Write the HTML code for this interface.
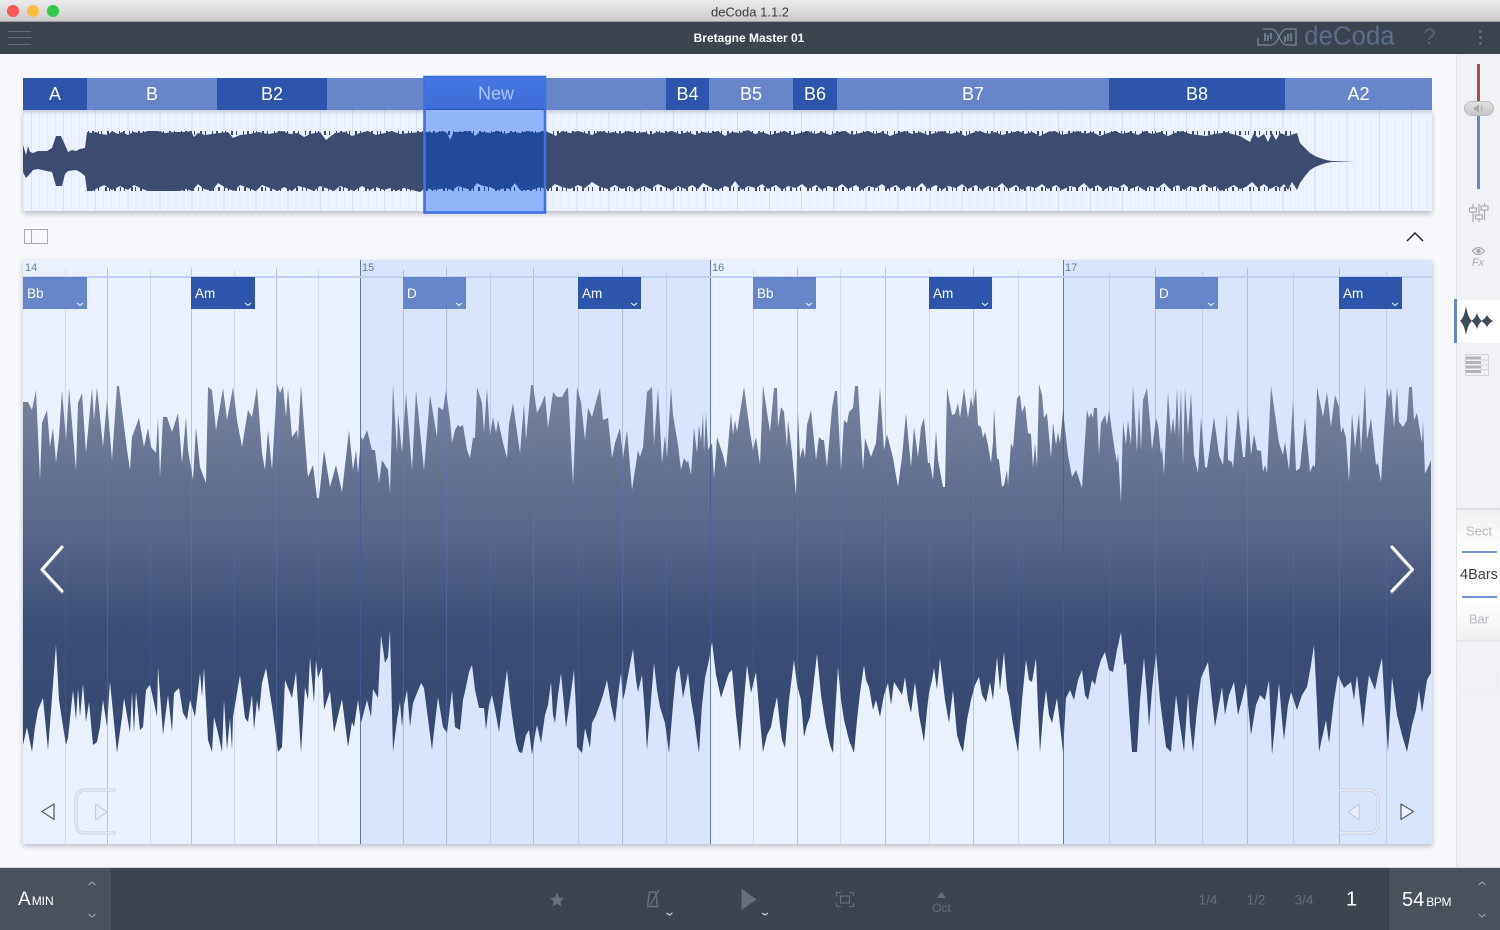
<!DOCTYPE html>
<html><head><meta charset="utf-8"><title>deCoda</title>
<style>
*{box-sizing:border-box}
html,body{margin:0;padding:0;width:1500px;height:930px;overflow:hidden;background:#f7f8fb;font-family:"Liberation Sans",sans-serif}
.a{position:absolute}
.t{position:absolute;white-space:nowrap;transform:translate(-50%,-50%)}
.s{position:absolute;top:78px;height:32px;color:#fff;font-size:18px;line-height:32px;text-align:center}
.d{background:#2c55ab}.l{background:#6785c9}
.c{position:absolute;top:277px;width:64px;height:32px;color:#fff;font-size:13.5px;line-height:33px;padding-left:4px}
.c svg{position:absolute;right:3px;bottom:2px}
.n{position:absolute;top:262px;font-size:11px;color:#5f7cbf}
</style></head><body>
<!-- title bar -->
<div class="a" style="left:0;top:0;width:1500px;height:22px;background:linear-gradient(#ebebeb,#cdcdcd);border-bottom:1px solid #9c9c9c"></div>
<div class="a" style="left:7px;top:5px;width:12px;height:12px;border-radius:50%;background:#fc5753"></div>
<div class="a" style="left:27px;top:5px;width:12px;height:12px;border-radius:50%;background:#fdbc40"></div>
<div class="a" style="left:47px;top:5px;width:12px;height:12px;border-radius:50%;background:#33c748"></div>
<div class="t" style="left:750px;top:11.500px;font-size:13px;color:#3c3c3c">deCoda 1.1.2</div>
<!-- nav -->
<div class="a" style="left:0;top:22px;width:1500px;height:32px;background:#3b444f"></div>
<div class="a" style="left:8px;top:30.500px;width:23px;height:1px;background:#626b76"></div>
<div class="a" style="left:8px;top:37px;width:23px;height:1px;background:#626b76"></div>
<div class="a" style="left:8px;top:43.500px;width:23px;height:1px;background:#626b76"></div>
<div class="t" style="left:749px;top:38px;font-size:12px;font-weight:bold;color:#fff">Bretagne Master 01</div>
<svg class="a" style="left:1255px;top:26px" width="44" height="22" viewBox="1255 26 44 22" fill="none" stroke="#75879f" stroke-width="1.300">
<path d="M1258 38V45H1271C1279 45 1279 29 1287 29H1296V45H1287C1279 45 1279 29 1271 29H1263"/>
<path d="M1265 33V41M1268 35V41M1271 33V39M1285 36V42M1288 34V41M1291 33V41" stroke-width="1.600"/>
</svg>
<div class="t" style="left:1349.500px;top:37px;font-size:25.500px;color:#5c6e8c;letter-spacing:.2px">deCoda</div>
<div class="t" style="left:1429.500px;top:37px;font-size:22px;color:#596472">?</div>
<div class="a" style="left:1479px;top:30px;width:3px;height:3px;border-radius:50%;background:#626c78"></div>
<div class="a" style="left:1479px;top:36px;width:3px;height:3px;border-radius:50%;background:#626c78"></div>
<div class="a" style="left:1479px;top:42px;width:3px;height:3px;border-radius:50%;background:#626c78"></div>

<!-- right sidebar -->
<div class="a" style="left:1456px;top:54px;width:44px;height:813px;background:#f0f1f4;border-left:1px solid #e2e3e7"></div>
<div class="a" style="left:1477px;top:64px;width:3px;height:38px;background:#b0474d"></div>
<div class="a" style="left:1477px;top:114px;width:3px;height:75px;background:#6785c9"></div>
<div class="a" style="left:1464px;top:101px;width:30px;height:15px;border-radius:8px;background:linear-gradient(#e2e2e4,#c6c7ca);border:1px solid #bcbdc0"></div>
<svg class="a" style="left:1473px;top:103px" width="12" height="11" viewBox="0 0 12 11"><path d="M1 4H3L6 1V10L3 7H1Z" fill="#a4a6aa"/><path d="M8 3Q10 5.500 8 8" stroke="#a4a6aa" fill="none"/></svg>
<svg class="a" style="left:1468px;top:203px" width="21" height="20" viewBox="0 0 21 20" fill="none" stroke="#a5a8ae" stroke-width="1.100">
<path d="M5 1V5M5 9V19M11 1V12M11 16V19M16.500 0V3M16.500 7V17"/><rect x="1.500" y="5" width="7" height="4"/><rect x="7.500" y="12" width="7" height="4"/><rect x="13" y="3" width="7" height="4"/></svg>
<svg class="a" style="left:1472px;top:246px" width="13" height="10" viewBox="0 0 13 10"><path d="M.5 5Q6.500-2 12.500 5Q6.500 12 .5 5Z" fill="none" stroke="#a9abb1" stroke-width="1.200"/><circle cx="6.500" cy="5" r="2.300" fill="#a9abb1"/></svg>
<div class="t" style="left:1478px;top:263px;font-size:11px;font-style:italic;color:#a9abb1">Fx</div>
<div class="a" style="left:1457px;top:300px;width:43px;height:43px;background:#fff"></div>
<div class="a" style="left:1454px;top:299px;width:3px;height:44px;background:#6785c9"></div>
<svg class="a" style="left:1459px;top:305px" width="36" height="31" viewBox="1459 305 36 31" fill="#3f4b59"><path d="M1460 321Q1464 318 1466 306Q1468 318 1472 321Q1468 324 1466 335Q1464 324 1460 321Z"/><path d="M1471 321Q1475 319 1477 313Q1479 319 1482 321Q1479 323 1477 329Q1475 323 1471 321Z"/><path d="M1481 321Q1485 319 1487 315Q1489 319 1493 321Q1489 323 1487 327Q1485 323 1481 321Z"/></svg>
<svg class="a" style="left:1465px;top:353px" width="25" height="24" viewBox="0 0 25 24"><rect x=".5" y="1.500" width="23" height="21" rx="1" fill="none" stroke="#d3d4d8"/><path d="M1 5H16M1 9.500H16M1 14H16M1 18.500H16" stroke="#b3b5ba" stroke-width="3"/><path d="M16 7H24M16 12H24M16 16.500H24" stroke="#d3d4d8"/></svg>
<div class="a" style="left:1457px;top:508px;width:43px;height:134px;background:linear-gradient(#eeeff1,#fff 30%,#fff 70%,#eeeff1);border-top:2px solid #dcdde0;border-bottom:2px solid #e6e7ea"></div>
<div class="t" style="left:1479px;top:530.500px;font-size:13px;color:#b6b8bd">Sect</div>
<div class="a" style="left:1462px;top:551px;width:35px;height:2px;background:#7692d2"></div>
<div class="t" style="left:1479px;top:574.500px;font-size:14.500px;color:#3a3f47">4Bars</div>
<div class="a" style="left:1462px;top:595.500px;width:35px;height:2px;background:#7692d2"></div>
<div class="t" style="left:1479px;top:618.500px;font-size:13px;color:#b6b8bd">Bar</div>
<div class="a" style="left:1460px;top:670px;width:37px;height:23px;border:1px solid #ebecef"></div>

<!-- overview -->
<div class="a" style="left:23px;top:110px;width:1409px;height:101px;background-color:#ecf2fe;background-image:repeating-linear-gradient(90deg,#d3dff6 0,#d3dff6 1px,transparent 1px,transparent 32.090px),repeating-linear-gradient(90deg,#e4ebfb 0,#e4ebfb 1px,transparent 1px,transparent 8.020px);background-position:8px 0,0 0;box-shadow:0 3px 5px rgba(60,70,100,.3)"></div>
<div class="s d" style="left:23px;width:64px">A</div>
<div class="s l" style="left:87px;width:130px">B</div>
<div class="s d" style="left:217px;width:110px">B2</div>
<div class="s l" style="left:327px;width:97px"></div>
<div class="s l" style="left:546px;width:120px"></div>
<div class="s d" style="left:666px;width:43px">B4</div>
<div class="s l" style="left:709px;width:84px">B5</div>
<div class="s d" style="left:793px;width:44px">B6</div>
<div class="s l" style="left:837px;width:272px">B7</div>
<div class="s d" style="left:1109px;width:176px">B8</div>
<div class="s l" style="left:1285px;width:147px">A2</div>
<div class="a" style="left:23px;top:110px;width:1409px;height:5px;background:linear-gradient(rgba(70,80,110,.22),transparent)"></div>
<div class="a" style="left:424px;top:78px;width:122px;height:134px;background:#92b4f8"></div>
<div class="a" style="left:424px;top:78px;width:122px;height:32px;background:linear-gradient(#4677e2,#3f6dd8);border-bottom:1px solid #3259ad"></div>
<svg class="a" style="left:0;top:0" width="1500" height="230" viewBox="0 0 1500 230">
<defs><g id="ow"><path d="M23 145L26 155 28 146 30 152 33 153 38 151 47 151 52 148 56 136 61 136 65 145 68 152 72 150 76 151 80 149 85 148 87 132 92 133 96 132 100 134 108 135 112 131 118 134 122 132 128 135 133 132 140 133 148 131 158 131 165 133 175 132 185 132 191 131 194 137 198 133 205 135 212 134 220 133 228 132 233 138 240 135 250 134 258 132 268 134 275 133 282 131 290 134 298 133 304 137 310 134 320 132 326 140 335 133 345 132 352 136 360 133 368 131 376 135 385 133 392 131 400 134 410 133 420 132 427 132 435 133 443 131 447 133 450 140 454 132 462 132 470 131 475 136 480 132 490 133 498 131 505 134 512 132 520 133 528 131 535 133 545 131 550 133 556 136 562 131 570 133 578 131 585 133 592 135 600 131 608 133 614 132 620 134 628 131 636 133 645 132 650 135 657 132 665 133 672 131 680 134 688 132 695 135 702 132 710 133 718 131 725 136 732 132 740 133 748 130 755 134 762 132 770 135 778 133 785 131 792 135 800 133 808 131 815 134 822 132 830 135 838 132 845 131 852 135 860 133 868 131 875 134 882 132 890 136 898 133 905 131 912 134 920 132 928 135 935 133 942 131 950 134 958 132 965 136 972 133 980 131 988 134 995 132 1002 135 1010 133 1018 131 1025 134 1032 132 1040 136 1048 132 1055 131 1062 135 1070 133 1078 131 1085 134 1092 132 1100 136 1108 133 1115 131 1122 134 1130 132 1138 135 1145 131 1152 134 1160 132 1168 136 1175 133 1182 131 1190 134 1198 135 1206 136 1214 134 1222 133 1226 132 1232 134 1240 136 1250 142 1254 133 1258 138 1264 134 1268 142 1272 133 1276 140 1280 133 1288 136 1297 133 1300 143 1305 148 1310 153 1315 156 1320 158 1326 160 1332 161 1355 161 1332 162 1326 163 1320 165 1315 167 1310 170 1305 176 1300 183 1297 190 1292 182 1288 190 1284 184 1280 188 1276 186 1270 189 1264 184 1258 188 1252 182 1246 187 1240 189 1234 185 1228 188 1220 191 1216 186 1210 188 1204 184 1198 188 1190 186 1184 190 1178 185 1170 189 1164 183 1158 188 1150 186 1144 190 1138 186 1130 189 1124 184 1118 188 1110 186 1104 190 1098 185 1090 189 1084 183 1078 188 1070 186 1062 190 1056 185 1048 189 1042 184 1036 188 1028 186 1022 190 1016 185 1008 189 1002 183 996 188 988 186 982 190 976 185 968 189 962 184 956 188 948 186 942 190 936 185 928 189 922 183 916 188 908 186 902 190 896 185 888 189 882 184 876 188 868 186 862 190 856 185 848 189 842 184 836 188 828 186 822 190 816 185 808 189 802 184 796 188 788 186 782 190 776 185 768 189 762 184 756 188 748 186 742 190 735 181 730 188 725 186 718 190 710 187 703 183 698 189 692 185 685 189 678 186 672 190 665 187 658 184 650 189 644 186 636 190 630 186 622 189 615 185 608 189 600 187 592 182 585 188 578 185 570 189 562 187 555 184 549 189 545 189 540 187 535 189 528 190 520 190 515 183 510 189 505 188 497 190 490 187 483 186 477 183 471 190 465 188 458 186 452 190 446 188 440 189 432 190 426 187 420 192 412 190 404 188 396 191 390 188 384 190 376 187 370 190 362 186 354 191 346 188 340 186 334 191 326 188 320 186 314 191 306 188 298 186 292 191 284 187 278 191 270 188 262 185 256 191 248 188 240 185 234 191 226 188 218 183 212 191 204 189 198 184 192 191 186 189 180 191 170 191 156 191 148 191 140 188 134 185 128 190 120 186 112 190 104 185 98 188 92 191 87 191 85 176 80 172 76 170 68 171 65 174 62 186 56 186 52 172 47 171 38 169 33 170 28 176 26 178 23 172Z"/></g>
<clipPath id="sel"><rect x="424" y="110" width="122" height="104"/></clipPath></defs>
<g fill="#3c4c70" stroke="#3c4c70"><use href="#ow" stroke="none"/>
<path d="M88 133H1292" stroke-width="4" stroke-dasharray="1 3 2 4 1 2 1 5 2 3 1 6"/>
<path d="M88 189H1292" stroke-width="4" stroke-dasharray="2 4 1 3 1 6 2 2 1 4"/></g>
<g clip-path="url(#sel)" fill="#224a9a" stroke="#224a9a"><use href="#ow" stroke="none"/>
<path d="M88 133H1292" stroke-width="4" stroke-dasharray="1 3 2 4 1 2 1 5 2 3 1 6"/>
<path d="M88 189H1292" stroke-width="4" stroke-dasharray="2 4 1 3 1 6 2 2 1 4"/></g>
<rect x="424.500" y="77" width="120.500" height="135.500" fill="none" stroke="#3f72e3" stroke-width="2.600"/>
</svg>
<div class="t" style="left:496px;top:94px;font-size:18px;color:#a9c6f8">New</div>

<!-- toggle & chevron -->
<div class="a" style="left:24px;top:229px;width:24px;height:15px;border:1px solid #a9abb0"></div>
<div class="a" style="left:31px;top:229px;width:1px;height:15px;background:#a9abb0"></div>
<svg class="a" style="left:1405px;top:230px" width="20" height="13" viewBox="0 0 20 13"><path d="M2 11L10 3L18 11" fill="none" stroke="#222" stroke-width="1.400"/></svg>

<!-- main panel -->
<div class="a" style="left:23px;top:260px;width:1409px;height:584px;background:#eaf1fe;box-shadow:0 2px 5px rgba(60,70,100,.35)"></div>
<div class="a" style="left:360px;top:260px;width:350px;height:584px;background:#d8e5fc"></div>
<div class="a" style="left:1063px;top:260px;width:369px;height:584px;background:#d8e5fc"></div>
<svg class="a" style="left:0;top:0" width="1500" height="930" viewBox="0 0 1500 930">
<defs><linearGradient id="g" gradientUnits="userSpaceOnUse" x1="0" y1="385" x2="0" y2="760">
<stop offset="0" stop-color="#76849f"/><stop offset=".35" stop-color="#5c6a8c"/><stop offset=".65" stop-color="#3c4e77"/><stop offset="1" stop-color="#33476f"/></linearGradient></defs>
<path fill="url(#g)" d="M23 580V402L28 402 32 410 36 390 40 480 42 423 47 410 50 447 53 428 56 462 59 437 62 390 66 440 69 388 76 470 78 403 82 393 86 453 92 388 94 420 97 387 103 447 107 400 112 460 117 386 119 386 127 450 130 470 132 437 139 418 144 447 148 428 151 447 156 453 158 417 160 477 163 417 167 417 172 432 178 413 182 463 186 417 188 450 193 480 196 427 200 467 206 483 208 387 212 390 216 430 223 388 227 420 233 387 237 420 242 447 248 410 252 417 257 387 262 453 265 470 268 430 272 470 277 384 280 393 283 386 286 417 288 388 292 437 297 430 298 440 301 385 307 467 308 477 313 465 317 498 319 498 324 450 330 487 336 465 342 492 349 430 353 470 356 450 358 473 361 437 363 440 367 430 372 450 375 450 379 483 382 460 388 470 390 493 393 384 397 453 398 413 402 453 406 393 412 470 416 390 424 470 430 395 437 437 438 407 443 410 446 390 450 420 452 443 455 430 458 425 460 427 463 425 467 450 470 458 473 438 475 438 477 387 482 403 484 432 487 388 490 435 493 417 496 433 498 420 503 443 507 458 509 424 513 403 516 425 520 453 524 403 526 440 531 385 533 385 537 413 541 405 545 395 548 428 553 392 557 397 562 397 567 388 568 388 573 485 577 387 581 402 585 440 588 408 592 417 597 398 600 388 603 420 608 418 612 458 615 443 620 428 623 458 627 430 632 490 638 450 640 457 643 447 647 392 652 387 654 445 658 388 662 463 665 435 667 458 671 387 673 415 678 445 681 470 684 458 687 463 688 460 691 475 694 428 697 453 699 425 701 442 703 413 704 452 706 412 708 450 712 443 714 478 717 437 723 455 726 468 731 413 733 435 735 420 737 432 744 387 750 432 753 450 756 437 760 465 763 385 767 412 770 432 774 388 777 388 778 427 781 407 784 412 787 448 788 420 792 453 796 495 798 412 800 458 803 447 805 458 807 425 811 410 816 460 819 437 822 440 824 440 827 467 832 408 835 391 837 391 841 470 844 420 847 423 849 412 853 408 855 386 858 386 863 470 865 438 871 457 876 443 880 388 884 450 887 434 893 458 898 487 902 457 906 413 911 467 914 427 918 457 921 427 924 418 928 463 930 463 933 480 936 430 938 460 943 487 945 487 947 388 952 415 955 414 958 403 960 418 964 388 968 418 971 397 973 407 976 388 978 425 981 427 983 438 985 432 988 445 991 463 993 442 994 408 997 458 999 460 1002 487 1004 485 1007 470 1008 485 1011 443 1013 448 1017 398 1020 395 1022 412 1025 405 1028 433 1031 434 1033 468 1035 443 1037 467 1039 384 1042 395 1044 418 1047 413 1051 458 1053 422 1056 445 1058 432 1060 443 1063 410 1068 455 1072 477 1076 470 1082 488 1084 455 1087 410 1089 418 1091 413 1093 418 1094 408 1097 408 1099 455 1101 423 1105 415 1107 425 1109 410 1115 452 1117 463 1118 453 1121 503 1123 422 1126 445 1128 420 1131 445 1133 385 1137 452 1139 405 1141 450 1143 400 1147 388 1150 422 1152 450 1156 418 1158 425 1161 455 1162 447 1164 475 1168 392 1171 435 1173 417 1175 435 1177 388 1179 438 1181 389 1183 465 1185 388 1188 435 1191 392 1194 455 1198 473 1201 417 1205 467 1207 468 1214 417 1219 455 1223 465 1227 413 1228 460 1232 462 1233 468 1238 408 1243 457 1245 457 1248 413 1251 455 1254 434 1257 450 1261 451 1263 472 1265 465 1267 473 1271 386 1275 414 1279 443 1283 455 1285 442 1289 470 1293 400 1296 471 1300 468 1305 418 1310 472 1313 465 1315 467 1317 387 1323 417 1327 392 1331 427 1335 395 1339 407 1341 433 1343 427 1346 438 1349 482 1352 413 1355 448 1359 413 1361 453 1365 385 1367 440 1371 418 1376 465 1378 463 1381 482 1383 447 1387 388 1389 398 1391 388 1394 428 1397 388 1399 422 1403 427 1407 420 1409 387 1412 387 1414 420 1417 413 1422 443 1423 420 1425 474 1429 465 1431 460V580Z"/>
<path fill="url(#g)" d="M23 575V745L27 727 32 752 35 727 38 710 43 698 48 750 56 645 59 700 62 720 66 745 68 738 73 690 76 720 78 688 80 717 83 684 86 722 89 702 93 745 97 742 100 727 103 700 107 727 110 682 112 702 117 753 122 717 124 698 130 733 132 692 134 733 136 692 140 730 143 727 146 690 150 685 153 698 157 717 158 667 163 735 168 695 172 732 174 693 179 688 183 713 187 720 190 700 195 717 200 673 202 697 204 668 208 740 212 752 214 717 218 733 222 752 224 700 227 750 230 718 232 750 233 717 240 675 245 718 248 722 252 695 254 730 257 700 259 713 262 683 266 668 273 713 278 752 282 747 285 680 292 698 296 672 301 753 305 687 308 700 310 657 314 703 316 660 318 678 322 667 324 710 330 691 334 733 342 699 348 747 352 722 354 727 358 700 361 723 367 700 371 717 373 689 378 698 381 635 385 663 388 657 390 630 393 752 397 720 400 702 402 727 404 705 407 690 410 727 413 703 421 683 424 688 432 750 433 740 438 697 443 727 447 733 452 690 455 727 460 730 463 700 466 687 469 672 472 665 475 690 479 708 484 708 486 730 489 705 492 695 496 715 499 732 503 700 507 670 510 700 513 723 516 742 519 752 522 753 526 735 529 730 532 755 535 735 537 725 541 743 545 715 548 705 551 682 553 715 555 723 558 695 561 673 564 705 566 728 570 700 574 670 576 710 577 747 582 753 585 728 590 748 592 723 596 715 599 707 603 695 607 680 611 705 615 723 618 695 621 673 623 700 625 692 629 670 633 649 636 680 638 692 642 675 645 715 647 750 651 700 654 663 657 690 660 707 665 723 669 753 673 705 676 673 679 665 683 698 688 673 691 700 694 717 697 740 699 753 702 705 705 678 709 660 712 642 716 675 721 698 725 685 729 673 732 670 736 715 740 752 744 700 747 665 751 693 756 672 760 720 763 752 767 735 771 727 774 710 777 697 780 725 782 740 785 748 789 700 794 660 797 685 801 700 804 737 807 725 810 717 814 680 817 654 821 695 826 727 830 745 833 753 836 700 838 667 841 700 844 720 849 740 854 753 857 720 860 693 864 665 866 680 869 687 873 710 876 700 880 717 884 695 888 683 891 705 894 682 899 690 902 695 905 677 908 700 911 713 915 682 919 715 924 742 927 710 929 693 932 680 934 668 937 690 940 658 945 700 949 723 953 690 957 735 960 745 963 752 967 720 971 700 975 685 979 677 982 695 986 702 990 682 993 700 997 657 1000 690 1004 652 1007 690 1009 697 1013 725 1018 752 1022 700 1026 660 1029 680 1032 682 1036 658 1038 710 1040 753 1043 715 1046 690 1049 715 1052 723 1057 698 1060 725 1063 752 1066 698 1070 690 1074 700 1078 680 1082 670 1085 695 1088 700 1092 680 1095 685 1098 670 1101 660 1105 652 1109 670 1113 672 1117 650 1121 632 1124 665 1126 663 1129 710 1132 752 1137 752 1140 700 1144 658 1147 695 1149 727 1152 690 1156 653 1160 700 1166 747 1171 752 1176 695 1180 725 1184 752 1188 693 1190 725 1193 752 1197 710 1201 678 1208 662 1212 700 1215 727 1222 687 1225 715 1229 695 1234 682 1238 715 1242 700 1246 683 1249 715 1251 735 1256 705 1260 695 1265 700 1269 680 1272 755 1276 715 1279 683 1282 720 1284 740 1288 705 1291 692 1297 710 1302 695 1307 687 1311 665 1314 645 1317 705 1319 752 1326 720 1329 743 1334 700 1338 675 1344 688 1351 682 1354 700 1357 675 1363 728 1366 700 1369 675 1375 690 1379 670 1382 658 1385 710 1388 752 1392 677 1397 715 1402 735 1407 752 1412 725 1416 710 1419 690 1422 713 1427 680 1431 673V575Z"/>
<!-- grid -->
<path stroke="#5d7fc8" stroke-opacity=".2" stroke-width="1" d="M65.500 270V844M150.500 270V844M234.500 270V844M318.500 270V844M490.500 270V844M578.500 270V844M666.500 270V844M753.500 270V844M840.500 270V844M929.500 270V844M1018.500 270V844M1109.500 270V844M1202.500 270V844M1293.500 270V844M1386.500 270V844"/>
<path stroke="#5d7fc8" stroke-opacity=".38" stroke-width="1" d="M107.500 268V844M191.500 268V844M276.500 268V844M403.500 270V844M446.500 268V844M533.500 268V844M622.500 268V844M797.500 268V844M885.500 268V844M973.500 268V844M1155.500 268V844M1247.500 268V844M1339.500 268V844"/>
<path stroke="#3f5c9c" stroke-opacity=".8" stroke-width="1" d="M360.500 260V844M710.500 260V844M1063.500 260V844"/>
<rect x="23" y="276" width="1409" height="2" fill="#c0d0f0"/>
<!-- nav chevrons -->
<g fill="none" stroke="#8a93a8" stroke-opacity=".55" stroke-width="3.500" stroke-linecap="round" stroke-linejoin="round"><path d="M62 548L42 570.500L62 592.500M1392 548L1412 570.500L1392 592.500"/></g>
<g fill="none" stroke="#fff" stroke-width="3" stroke-linecap="round" stroke-linejoin="round"><path d="M62 547L42 569.500L62 591M1392 547L1412.500 569.500L1392 591"/></g>
<!-- loop brackets -->
<g fill="none" stroke="#c9d0de" stroke-width="3.200" stroke-linecap="round"><path d="M114 790H86Q76 790 76 800V823Q76 833 86 833H114M1340 790H1368Q1378 790 1378 800V823Q1378 833 1368 833H1340"/></g>
<g fill="none" stroke="#edf2fc" stroke-width="1.200" stroke-linecap="round"><path d="M114 790H86Q76 790 76 800V823Q76 833 86 833H114M1340 790H1368Q1378 790 1378 800V823Q1378 833 1368 833H1340"/></g>
<path d="M54 804L42 811.500L54 819.500ZM1401 804L1413.500 811.500L1401 819.500Z" fill="#eef3fd" stroke="#5c6068" stroke-width="1.300" stroke-linejoin="round"/>
<path d="M95.500 804L107 812L95.500 820ZM1359.500 804L1348 812L1359.500 820Z" fill="#e8eefa" stroke="#c6cedd" stroke-width="1.300" stroke-linejoin="round"/>
</svg>
<div class="n" style="left:25px">14</div><div class="n" style="left:362px">15</div><div class="n" style="left:712px">16</div><div class="n" style="left:1065px">17</div>
<div class="c l" style="left:23px">Bb<svg width="8" height="5" viewBox="0 0 8 5"><path d="M1 1L4 3.500L7 1" stroke="#fff" fill="none"/></svg></div>
<div class="c d" style="left:191px">Am<svg width="8" height="5" viewBox="0 0 8 5"><path d="M1 1L4 3.500L7 1" stroke="#fff" fill="none"/></svg></div>
<div class="c l" style="left:403px;width:63px">D<svg width="8" height="5" viewBox="0 0 8 5"><path d="M1 1L4 3.500L7 1" stroke="#fff" fill="none"/></svg></div>
<div class="c d" style="left:578px;width:63px">Am<svg width="8" height="5" viewBox="0 0 8 5"><path d="M1 1L4 3.500L7 1" stroke="#fff" fill="none"/></svg></div>
<div class="c l" style="left:753px;width:63px">Bb<svg width="8" height="5" viewBox="0 0 8 5"><path d="M1 1L4 3.500L7 1" stroke="#fff" fill="none"/></svg></div>
<div class="c d" style="left:929px;width:63px">Am<svg width="8" height="5" viewBox="0 0 8 5"><path d="M1 1L4 3.500L7 1" stroke="#fff" fill="none"/></svg></div>
<div class="c l" style="left:1155px;width:63px">D<svg width="8" height="5" viewBox="0 0 8 5"><path d="M1 1L4 3.500L7 1" stroke="#fff" fill="none"/></svg></div>
<div class="c d" style="left:1339px;width:63px">Am<svg width="8" height="5" viewBox="0 0 8 5"><path d="M1 1L4 3.500L7 1" stroke="#fff" fill="none"/></svg></div>

<!-- bottom bar -->
<div class="a" style="left:0;top:867px;width:1500px;height:63px;background:#3b444f;border-top:1px solid #d9dadd"></div>
<div class="a" style="left:0;top:868px;width:111px;height:62px;background:#47525c"></div>
<div class="a" style="left:1389px;top:868px;width:111px;height:62px;background:#47525c"></div>
<div class="a" style="left:18px;top:889px;font-size:19px;color:#fff;line-height:22px">A<span style="font-size:12px;margin-left:1px">MIN</span></div>
<div class="a" style="left:1402px;top:888px;font-size:20px;color:#fff;line-height:24px">54<span style="font-size:12px;margin-left:2px;letter-spacing:-.4px">BPM</span></div>
<svg class="a" style="left:0;top:868px" width="1500" height="62" viewBox="0 868 1500 62" fill="none">
<path d="M88.500 885L92 882L95.500 885M88.500 914L92 917L95.500 914M1478.500 885L1482 882L1485.500 885M1478.500 914L1482 917L1485.500 914" stroke="#a4aab1" stroke-width="1"/>
<path d="M557 892.500L559.200 897.500L564 898L560.400 901.500L561.500 906.500L557 904L552.500 906.500L553.600 901.500L550 898L554.800 897.500Z" fill="#66717e"/>
<path d="M649.500 892H655.500L657.500 906.500H647.500Z" stroke="#66717e" stroke-width="1.400" stroke-linejoin="round"/><path d="M650 905L659 890" stroke="#66717e" stroke-width="1.300"/>
<path d="M741.500 888.500L756.500 899.500L741.500 910Z" fill="#66717e"/>
<path d="M666.500 913L669.500 915L672.500 913M762 913L765 915L768 913" stroke="#c8ccd1" stroke-width="1.300"/>
<path d="M836.500 896V892.500H841M849 892.500H853.500V896M853.500 903V906.500H849M841 906.500H836.500V903" stroke="#66717e" stroke-width="1.100"/><rect x="840.500" y="896" width="9" height="7" stroke="#66717e" stroke-width="1.100"/>
<path d="M941.500 892L946 898H937Z" fill="#66717e"/>
</svg>
<div class="t" style="left:941.500px;top:908px;font-size:12px;color:#66717e">Oct</div>
<div class="t" style="left:1208px;top:900px;font-size:13.500px;color:#66717e">1/4</div>
<div class="t" style="left:1256px;top:900px;font-size:13.500px;color:#66717e">1/2</div>
<div class="t" style="left:1304px;top:900px;font-size:13.500px;color:#66717e">3/4</div>
<div class="t" style="left:1351.500px;top:900px;font-size:20px;color:#fff">1</div>
</body></html>
